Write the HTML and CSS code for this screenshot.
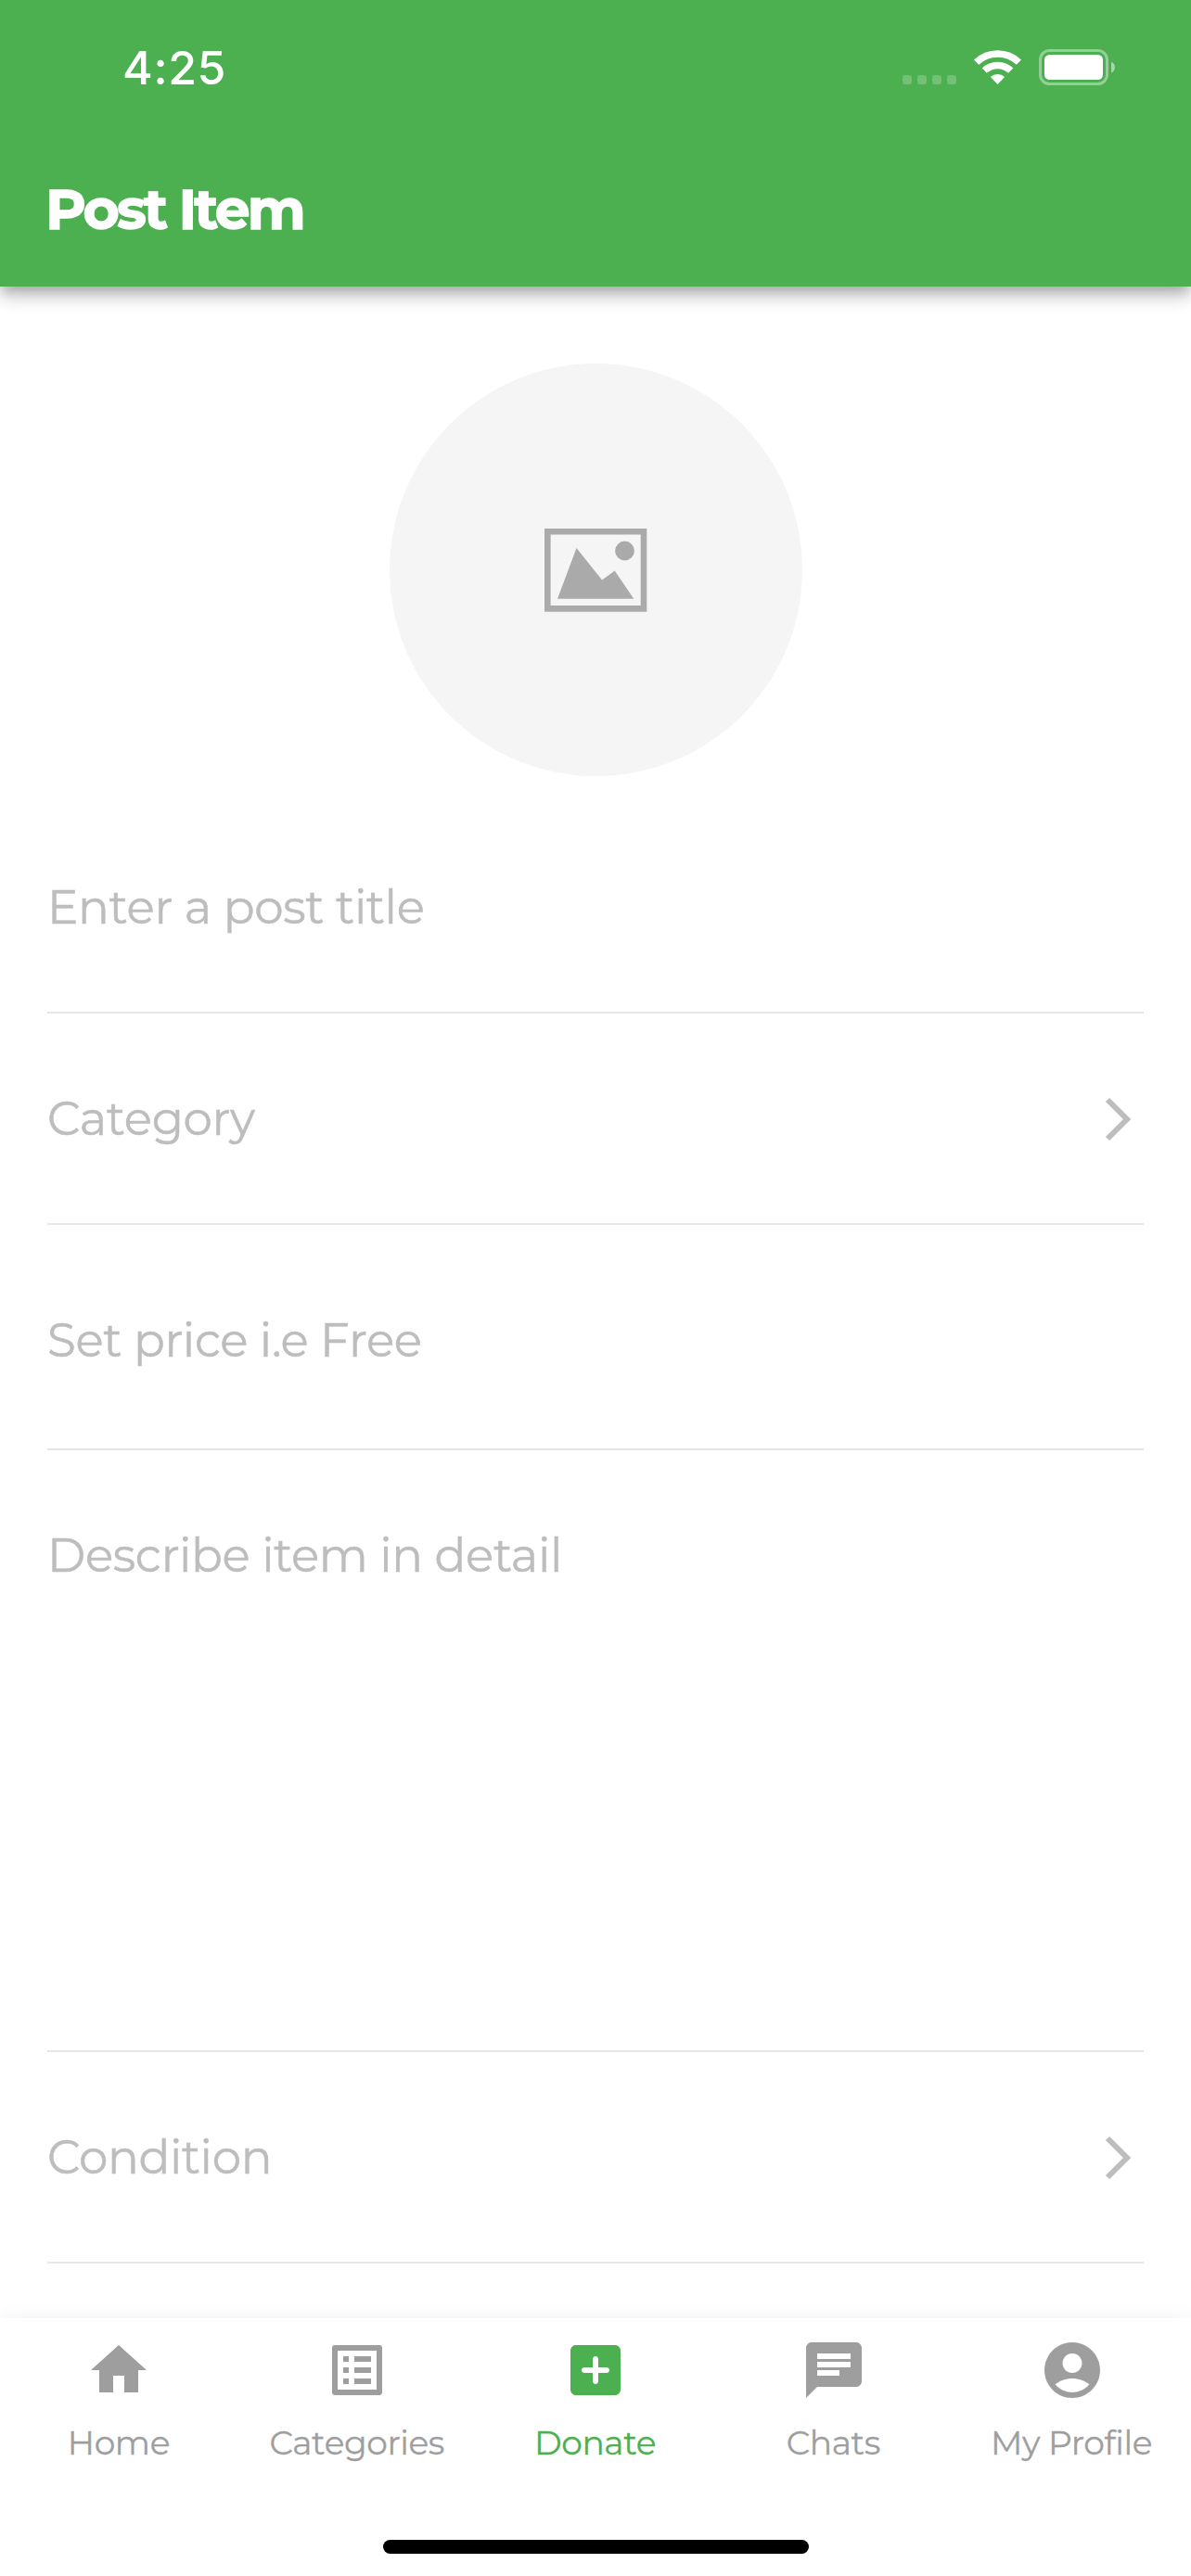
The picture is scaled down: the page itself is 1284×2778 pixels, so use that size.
FILE: index.html
```html
<!DOCTYPE html>
<html lang="en">
<head>
<meta charset="utf-8">
<title>Post Item</title>
<link rel="stylesheet" href="styles.css">
</head>
<body>
<div class="screen">
  <header class="header">
    <div class="status-bar">
      <span class="time">4:25</span>
      <svg class="status-icons" width="232" height="42" viewBox="0 0 232 42" aria-hidden="true">
        <g fill="#fff" fill-opacity=".22">
          <rect x="1" y="30" width="10" height="10" rx="3"/>
          <rect x="17" y="30" width="10" height="10" rx="3"/>
          <rect x="33" y="30" width="10" height="10" rx="3"/>
          <rect x="49" y="30" width="10" height="10" rx="3"/>
        </g>
        <g fill="none" stroke="#fff" stroke-width="7.4">
          <path d="M80.6 16.2a33 33 0 0 1 45.8 0"/>
          <path d="M89.3 25.2a20.4 20.4 0 0 1 28.4 0"/>
        </g>
        <path d="M103.500 40l-7.600-7.900a11 11 0 0 1 15.200 0z" fill="#fff"/>
        <rect x="149.500" y="3.500" width="72" height="36" rx="10" fill="none" stroke="#fff" stroke-opacity=".4" stroke-width="3"/>
        <rect x="154" y="8" width="63" height="27" rx="5.500" fill="#fff"/>
        <path d="M226 15.500q4 2 4 6t-4 6z" fill="#fff" fill-opacity=".5"/>
      </svg>
    </div>
    <h1 class="title">Post Item</h1>
  </header>

  <main class="form">
    <div class="photo">
      <svg width="111" height="90" viewBox="0 0 111 90" aria-hidden="true">
        <path d="M3.300 3.300h103.700v83.100H3.300z" fill="none" stroke="#aaa" stroke-width="6.600"/>
        <path d="M14 75.700L34.500 21 62 55.500l13.700-10 20.600 30.200z" fill="#aaa"/>
        <circle cx="86.500" cy="24" r="10.400" fill="#aaa"/>
      </svg>
    </div>
    <div class="field field-title"><span>Enter a post title</span></div>
    <div class="field field-category"><span>Category</span>
      <svg class="chevron" width="30" height="48" viewBox="0 0 30 48" aria-hidden="true"><path d="M4 3l21 21L4 45"/></svg>
    </div>
    <div class="field field-price"><span>Set price i.e Free</span></div>
    <div class="field field-details"><span>Describe item in detail</span></div>
    <div class="field field-condition"><span>Condition</span>
      <svg class="chevron" width="30" height="48" viewBox="0 0 30 48" aria-hidden="true"><path d="M4 3l21 21L4 45"/></svg>
    </div>
  </main>

  <nav class="tabs">
    <div class="tab-row">
      <a class="tab"><svg viewBox="0 0 24 24"><path d="M10 20v-6h4v6h5v-8h3L12 3 2 12h3v8z"/></svg><span>Home</span></a>
      <a class="tab"><svg viewBox="0 0 24 24"><path d="M19 5v14H5V5h14m1.100-2H3.900c-.5 0-.9.4-.9.9v16.200c0 .4.4.9.9.9h16.200c.4 0 .9-.5.9-.9V3.900c0-.5-.5-.9-.9-.9zM11 7h6v2h-6V7zm0 4h6v2h-6v-2zm0 4h6v2h-6zM7 7h2v2H7zm0 4h2v2H7zm0 4h2v2H7z"/></svg><span>Categories</span></a>
      <a class="tab active"><svg viewBox="0 0 24 24"><path d="M19 3H5c-1.110 0-2 .9-2 2v14c0 1.100.89 2 2 2h14c1.100 0 2-.9 2-2V5c0-1.100-.9-2-2-2zm-3 10h-3v3c0 .55-.45 1-1 1s-1-.45-1-1v-3H8c-.55 0-1-.45-1-1s.45-1 1-1h3V8c0-.55.45-1 1-1s1 .45 1 1v3h3c.55 0 1 .45 1 1s-.45 1-1 1z"/></svg><span>Donate</span></a>
      <a class="tab"><svg viewBox="0 0 24 24"><path d="M20 2H4c-1.100 0-1.990.9-1.990 2L2 22l4-4h14c1.100 0 2-.9 2-2V4c0-1.100-.9-2-2-2zM6 9h12v2H6V9zm8 5H6v-2h8v2zm4-6H6V6h12v2z"/></svg><span>Chats</span></a>
      <a class="tab"><svg viewBox="0 0 24 24"><path d="M12 2C6.480 2 2 6.480 2 12s4.480 10 10 10 10-4.480 10-10S17.520 2 12 2zm0 4c1.930 0 3.500 1.570 3.500 3.500S13.930 13 12 13s-3.500-1.570-3.500-3.500S10.070 6 12 6zm0 14c-2.030 0-4.430-.82-6.140-2.880C7.550 15.800 9.680 15 12 15s4.450.8 6.140 2.120C16.430 19.180 14.030 20 12 20z"/></svg><span>My Profile</span></a>
    </div>
    <div class="home-indicator"></div>
  </nav>
</div>
</body>
</html>
```
FILE: styles.css
```css
* { box-sizing: border-box; }

body {
  margin: 0;
  background: #fff;
  font-family: Montserrat, Inter, "Liberation Sans", sans-serif;
}

.screen {
  display: flex;
  flex-direction: column;
  width: 1284px;
  height: 2778px;
  overflow: hidden;
}

.header {
  flex: none;
  height: 309px;
  padding: 51px 82px 0 49px;
  background: #4caf50;
  color: #fff;
  box-shadow: 0 6px 12px -3px rgba(0, 0, 0, .2), 0 12px 15px rgba(0, 0, 0, .14), 0 3px 30px rgba(0, 0, 0, .12);
}

.status-bar {
  display: flex;
  justify-content: space-between;
  align-items: flex-start;
  height: 42px;
}

.time {
  margin-left: 83px;
  font: 500 50px/44px Inter, "Liberation Sans", sans-serif;
  letter-spacing: .6px;
}

.status-icons { margin-right: -2px; }

.title {
  margin: 101px 0 0;
  font-size: 60px;
  line-height: 64px;
  font-weight: 700;
  letter-spacing: -2.8px;
  -webkit-text-stroke: 1.4px #fff;
}

.form {
  flex: 1;
  display: flex;
  flex-direction: column;
  padding: 83px 51px 0;
}

.photo {
  flex: none;
  display: flex;
  align-items: center;
  justify-content: center;
  align-self: center;
  width: 445px;
  height: 445px;
  border-radius: 50%;
  background: #f5f5f5;
}

.field {
  flex: none;
  display: flex;
  justify-content: space-between;
  border-bottom: 2px solid #e6e6e6;
  color: #bdbdbd;
  font-size: 50px;
  line-height: 60px;
  letter-spacing: -.35px;
  -webkit-text-stroke: .5px currentColor;
  white-space: nowrap;
}

.field-title { height: 256px; padding-top: 112px; }
.field-category { height: 228px; padding-top: 84px; }
.field-price { height: 243px; padding-top: 95px; }
.field-details { height: 649px; padding-top: 84px; }
.field-condition { height: 228px; padding-top: 84px; }

.chevron {
  margin: 6px 13px 0 0;
  fill: none;
  stroke: #bdbdbd;
  stroke-width: 6px;
}

.tabs {
  flex: none;
  display: flex;
  flex-direction: column;
  align-items: center;
  justify-content: space-between;
  height: 278px;
  padding: 20px 0 24px;
  background: #fff;
  box-shadow: 0 0 20px rgba(0, 0, 0, .06);
}

.tab-row {
  display: grid;
  grid-template-columns: repeat(5, 1fr);
  width: 100%;
}

.tab {
  display: flex;
  flex-direction: column;
  align-items: center;
  gap: 20px;
  color: #9e9e9e;
  font-size: 36px;
  line-height: 44px;
  letter-spacing: -.4px;
  -webkit-text-stroke: .3px currentColor;
  white-space: nowrap;
}

.tab span { margin-right: 1px; }
.tab svg { width: 72px; height: 72px; fill: currentColor; }
.active { color: #4caf50; }

.home-indicator {
  width: 459px;
  height: 15px;
  border-radius: 8px;
  background: #000;
}
```
